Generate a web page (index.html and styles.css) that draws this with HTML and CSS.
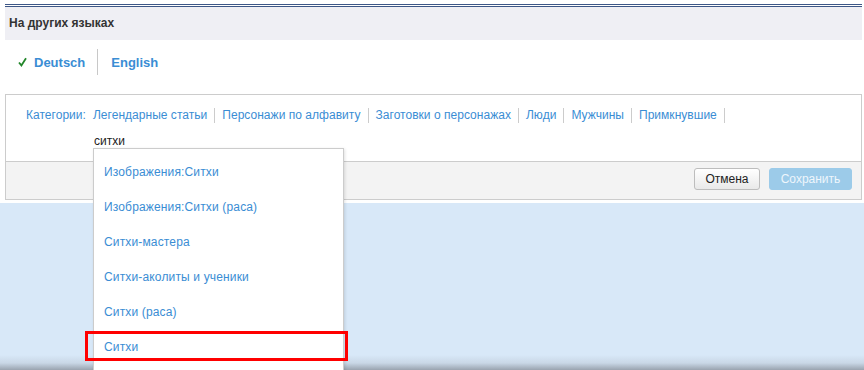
FILE: index.html
```html
<!DOCTYPE html>
<html lang="ru">

<head>
  <meta charset="UTF-8">
  <title>На других языках</title>
  <link rel="stylesheet" href="styles.css">
</head>

<body>
<div class="wrap">
  <div class="topline"></div>
  <div class="head">На других языках</div>
  <ul class="langs">
    <li class="cur">
      <svg class="check" width="9" height="10" viewBox="0 0 9 10"><path d="M1 5.5 L3.4 8.4 L8 1.2" fill="none" stroke="#22862a" stroke-width="1.8"/></svg>
      <a href="#">Deutsch</a>
    </li>
    <li><a href="#">English</a></li>
  </ul>
  <div class="cats">
    <div class="cats-body">
      <div class="cats-list">
        <span class="label">Категории:</span>
        <a href="#">Легендарные статьи</a><i></i>
        <a href="#">Персонажи по алфавиту</a><i></i>
        <a href="#">Заготовки о персонажах</a><i></i>
        <a href="#">Люди</a><i></i>
        <a href="#">Мужчины</a><i></i>
        <a href="#">Примкнувшие</a><i></i>
      </div>
      <div class="cats-add">
        <div class="field">
          <input type="text" value="ситхи">
          <ul class="suggest">
            <li>Изображения:Ситхи</li>
            <li>Изображения:Ситхи (раса)</li>
            <li>Ситхи-мастера</li>
            <li>Ситхи-аколиты и ученики</li>
            <li>Ситхи (раса)</li>
            <li>Ситхи</li>
            <div class="mark"></div>
          </ul>
        </div>
      </div>
    </div>
    <div class="cats-foot">
      <button class="btn">Отмена</button>
      <button class="btn btn-save">Сохранить</button>
    </div>
  </div>
</div>
<div class="canvas"></div>
</body>

</html>
```

FILE: styles.css
```css
* {
  padding: 0;
  margin: 0;
  box-sizing: border-box;
}

body {
  font-family: "Liberation Sans", Arial, sans-serif;
  font-size: 12px;
  color: #222;
  background: #fff;
  overflow: hidden;
}

ul {
  list-style: none;
}

a {
  color: #3a8dd4;
  text-decoration: none;
}

.wrap {
  margin: 0 2px 0 5px;
}

.topline {
  margin-top: 4px;
  height: 3px;
  border-top: 1px solid #3d5787;
  border-bottom: 1px solid #3d5787;
}

.head {
  height: 33px;
  line-height: 32px;
  padding-left: 4px;
  background: #efeff4;
  font-weight: bold;
  color: #333;
}

.langs {
  display: flex;
  padding-top: 9px;
  margin-bottom: 19px;
}

.langs li {
  display: flex;
  align-items: center;
  height: 26px;
  padding: 0 13px;
  font-size: 13px;
  font-weight: bold;
}

.langs li.cur {
  padding-right: 12px;
}

.langs li + li {
  border-left: 1px solid #c8c8c8;
}

.langs .check {
  margin-right: 7px;
}

.cats {
  border: 1px solid #ccc;
}

.cats-body {
  padding: 13px 0 13px 20px;
  border-bottom: 1px solid #ccc;
}

.cats-list {
  display: flex;
  align-items: center;
  height: 15px;
  line-height: 15px;
  color: #3a8dd4;
  letter-spacing: 0.03px;
}

.cats-list .label {
  margin-right: 7px;
}

.cats-list i {
  width: 1px;
  height: 15px;
  margin: 0 7px;
  background: #ccc;
}

.cats-add {
  margin: 10px 0 0 68px;
  height: 15px;
}

.field {
  position: relative;
  width: 80px;
}

.field input {
  display: block;
  width: 80px;
  height: 15px;
  border: 0;
  outline: 0;
  background: transparent;
  font: 12px "Liberation Sans", Arial, sans-serif;
  color: #222;
}

.suggest {
  position: absolute;
  z-index: 5;
  top: 100%;
  left: -1px;
  width: 251px;
  padding: 6px 0;
  background: #fff;
  border: 1px solid #ccc;
  box-shadow: 1px 1px 3px rgba(0, 0, 0, 0.12);
}

.suggest li {
  height: 35px;
  line-height: 35px;
  padding-left: 10px;
  color: #3a8dd4;
  letter-spacing: 0.15px;
}

.suggest .mark {
  position: absolute;
  left: -9px;
  top: 182px;
  width: 263px;
  height: 30px;
  border: 3px solid #f00;
}

.cats-foot {
  display: flex;
  justify-content: flex-end;
  gap: 9px;
  height: 37px;
  padding: 6px 9px 0 0;
  background: #f3f3f3;
}

.btn {
  width: 66px;
  height: 22px;
  border: 1px solid #bdbdbd;
  border-radius: 3px;
  background: linear-gradient(#fff, #e9e9e9);
  font: 12px "Liberation Sans", Arial, sans-serif;
  color: #222;
}

.btn-save {
  width: 83px;
  border-color: #9ccbe9;
  background: #9ccbe9;
  color: #eef6fc;
}

.canvas {
  margin-top: 3px;
  height: 170px;
  background: linear-gradient(#d8e8f8 152px, #c9d7e6 160px, #858d98 170px);
}
```
